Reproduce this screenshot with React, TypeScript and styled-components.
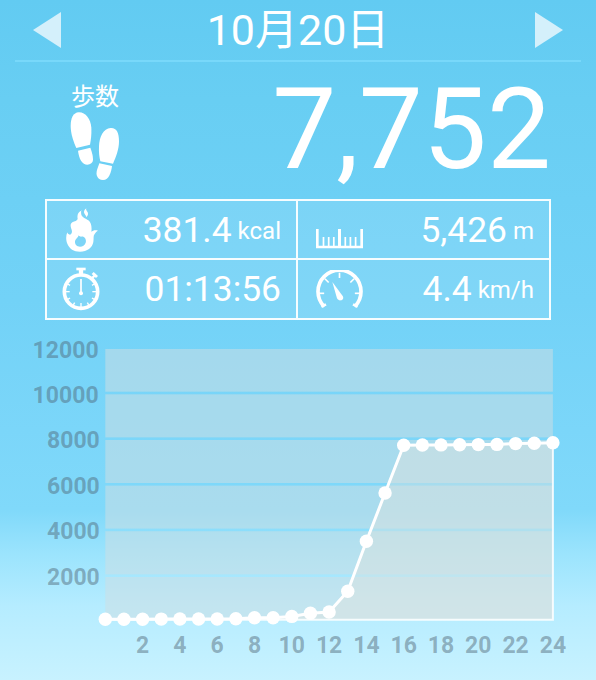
import React from "react";
import styled, { createGlobalStyle } from "styled-components";

const GlobalStyle = createGlobalStyle`
  * { box-sizing: border-box; }
  body { margin: 0; }
`;

const Screen = styled.main`
  width: 596px;
  height: 680px;
  overflow: hidden;
  display: flex;
  flex-direction: column;
  color: #fff;
  font-family: Roboto, "Noto Sans CJK JP", sans-serif;
  background: linear-gradient(
    #62cbf2 0, #68cef3 100px, #72d2f7 300px, #7bd6f9 430px,
    #80d9fa 510px, #9ce4fd 555px, #b5ecff 605px, #c8f2ff 680px
  );
`;

const DateBar = styled.header`
  height: 62px;
  margin: 0 15px;
  padding: 0 18px;
  display: flex;
  align-items: center;
  justify-content: space-between;
  border-bottom: 2px solid #78d8fa;
`;

const DateTitle = styled.h1`
  margin: 0;
  font-size: 43px;
  line-height: 60px;
  font-weight: 400;
  white-space: nowrap;
`;

const ArrowButton = styled.button`
  width: 28px;
  height: 36px;
  padding: 0;
  border: 0;
  background: none;
  color: #d4f0fb;
  svg { display: block; }
`;

const Summary = styled.section`
  height: 137px;
  padding: 0 45px 0 70px;
  display: flex;
  justify-content: space-between;
`;

const StepsLabel = styled.div`
  width: 50px;
  padding-top: 20px;
  display: flex;
  flex-direction: column;
  align-items: center;
  font-size: 24px;
  line-height: 30px;
  white-space: nowrap;
  svg { display: block; }
`;

const StepCount = styled.div`
  font-size: 114px;
  line-height: 135px;
`;

const Stats = styled.section`
  width: 506px;
  height: 121px;
  margin-left: 45px;
  display: grid;
  grid-template-columns: 249px 251px;
  grid-template-rows: 57px 58px;
  gap: 2px;
  border: 2px solid #f6fdff;
  background: linear-gradient(#f6fdff, #f6fdff) 249px 0 / 2px 100% no-repeat,
    linear-gradient(#f6fdff, #f6fdff) 0 57px / 100% 2px no-repeat,
    rgba(255, 255, 255, 0.1);
`;

const Stat = styled.div`
  padding: 0 15px;
  display: flex;
  align-items: center;
  justify-content: space-between;
`;

const IconSlot = styled.div<{ $width: number; $drop?: number }>`
  width: ${(p) => p.$width}px;
  height: 100%;
  padding-top: ${(p) => p.$drop ?? 0}px;
  display: flex;
  align-items: center;
  justify-content: center;
  svg { display: block; }
`;

const Reading = styled.div`
  display: flex;
  align-items: baseline;
  gap: 6px;
  font-size: 35.4px;
  line-height: 42px;
  white-space: nowrap;
`;

const Unit = styled.span`
  font-size: 24px;
  line-height: 30px;
  transform: translateY(-3px);
`;

const Chart = styled.svg`
  display: block;
  width: 596px;
  height: 360px;
  text {
    font: 700 23px Roboto, sans-serif;
    fill: rgba(76, 96, 111, 0.45);
  }
`;

const Arrow = ({ next = false }: { next?: boolean }) => (
  <svg width="28" height="36" viewBox="0 0 28 36" fill="currentColor">
    <path d={next ? "M0 0 28 18 0 36Z" : "M28 0 0 18 28 36Z"} />
  </svg>
);

const Footprints = () => (
  <svg width="50" height="69" viewBox="0 0 150 207" fill="#fff">
    <path d="M26 1C10 2 2 18 2 42c0 24 9 48 17 66l41-10c3-16 5-32 4-51C62 20 46 0 26 1Z" />
    <path d="M24 116 61 107c5 13 8 25 8 35 0 11-8 16-17 16-15 0-25-16-28-42Z" />
    <path d="M122 48c-22 1-34 27-35 55-1 18 1 33 4 45l38 7c9-20 18-43 18-67 0-26-7-41-25-40Z" />
    <path d="M88 154 126 162c-2 18-9 42-27 42-18-1-22-16-18-30Z" />
  </svg>
);

const Flame = () => (
  <svg width="32" height="44" viewBox="0 0 96 132" fill="#fff">
    <path
      fillRule="evenodd"
      d="M48 7C35 12 33 23 35 33 34 38 26 40 19 43 11 48 14 58 17 65c2 8 0 14-5 15-5 0-8-4-8-7C-1 84 0 98 4 107c6 15 19 24 38 24 22 0 37-12 40-29 2-10-1-19 4-24 3-5 6-8 10-10-8-3-15-1-20 3 2-13 0-27-9-34-8-6-18-8-21-17-1-5-1-9 0-13ZM38 82c4 6 8 3 14 4 7 3 9 12 7 18-3 8-9 12-17 12-9 0-15-6-15-14 0-9 9-12 11-20Z"
    />
    <path d="M61 1c-7 5-9 11-5 17 3 4 5 6 5 10 7-7 6-13 2-18-3-4-3-6-2-9Z" />
  </svg>
);

const Stopwatch = () => (
  <svg width="38" height="44" viewBox="0 0 114 132" fill="none" stroke="#fff">
    <circle cx="57" cy="74" r="50" strokeWidth="11" />
    <path d="M43 6H71" strokeWidth="8" />
    <path d="M57 6V22" strokeWidth="13" />
    <path d="m89 34 9-8" strokeWidth="7" />
    <path d="m92 18 13 12" strokeWidth="9" />
    <path d="M57 36V78" strokeWidth="5" />
    <circle cx="57" cy="79" r="6" fill="#fff" stroke="none" />
    {[60, 90, 120, 150, 180, 210, 240, 270, 300].map((angle) => (
      <path
        key={angle}
        d={angle % 90 === 0 ? "M57 28V40" : "M57 28V36"}
        strokeWidth="4"
        transform={`rotate(${angle} 57 74)`}
      />
    ))}
  </svg>
);

const Ruler = () => (
  <svg width="47" height="20" viewBox="0 0 47 20" fill="none" stroke="#fff">
    <path d="M1.3 0V18H45.7V0" strokeWidth="2.7" />
    <path d="M23.5 0V18" strokeWidth="3" />
    <path d="M7.5 8V18M12.7 8V18M17.8 8V18M29.3 8V18M34.4 8V18M39.6 8V18" strokeWidth="1.7" />
  </svg>
);

const Gauge = () => (
  <svg width="47" height="39" viewBox="0 0 141 117" fill="none" stroke="#fff">
    <path d="M24.5 110A64.5 64.5 0 1 1 116.5 110" strokeWidth="11" />
    <path d="m16 110 14-7M125 110l-14-7" strokeWidth="8" />
    {[-90, -45, 0, 45, 90].map((angle) => (
      <path key={angle} d="M70.5 8V24" strokeWidth="5" transform={`rotate(${angle} 70.5 70)`} />
    ))}
    <path d="M49 36 80 78c4 7 0 12-5 13-5 1-9-1-12-6Z" fill="#fff" stroke="none" />
  </svg>
);

const stats = [
  { icon: <Flame />, slot: 39, value: "381.4", unit: "kcal" },
  { icon: <Ruler />, slot: 53, drop: 19, value: "5,426", unit: "m" },
  { icon: <Stopwatch />, slot: 38, value: "01:13:56" },
  { icon: <Gauge />, slot: 53, value: "4.4", unit: "km/h" },
];

/* Chart geometry: hourly cumulative steps, as heights inside the 596x360 drawing. */
const LEFT = 105.3;
const HOUR = 18.65;
const BASE = 299.7;
const levels = [
  299.3, 299.2, 299.2, 299.1, 299, 299, 299, 298.8, 297.8, 297.7, 296.4, 293.3,
  292, 271.3, 221.3, 173, 125.3, 125, 124.9, 124.7, 124.6, 124.4, 123.6, 123.2, 122.7,
];
const points = levels.map((y, hour) => ({ x: LEFT + hour * HOUR, y }));
const line = points.map((p) => `${p.x},${p.y}`).join(" ");
const RIGHT = LEFT + 24 * HOUR;
const bands = [29, 74.3, 120, 165.6, 211.2, 257];
const yLabels = [12000, 10000, 8000, 6000, 4000, 2000];

const StepsChart = () => (
  <Chart viewBox="0 0 596 360">
    {bands.map((top, i) => {
      const bottom = i < 5 ? bands[i + 1] - 2.6 : BASE;
      return (
        <rect
          key={top}
          x={LEFT}
          y={top}
          width={RIGHT - LEFT}
          height={bottom - top}
          fill="rgba(208,222,227,.52)"
        />
      );
    })}
    <polygon points={`${LEFT},${BASE} ${line} ${RIGHT},${BASE}`} fill="rgba(227,227,220,.4)" />
    <path
      d={`M${LEFT} ${BASE}H${RIGHT}V${levels[24]}`}
      fill="none"
      stroke="#fff"
      strokeOpacity=".85"
      strokeWidth="2"
    />
    <polyline points={line} fill="none" stroke="#fff" strokeWidth="3" />
    {points.map((p) => (
      <circle key={p.x} cx={p.x} cy={p.y} r="6.7" fill="#fff" />
    ))}
    {yLabels.map((value, i) => (
      <text key={value} x={i < 2 ? 98.6 : 99.8} y={37.6 + i * 45.4} textAnchor="end">
        {value}
      </text>
    ))}
    {Array.from({ length: 12 }, (_, i) => (i + 1) * 2).map((hour) => (
      <text key={hour} x={LEFT + hour * HOUR} y="333" textAnchor="middle">
        {hour}
      </text>
    ))}
  </Chart>
);

export default function App() {
  return (
    <>
      <GlobalStyle />
      <Screen>
        <DateBar>
          <ArrowButton aria-label="前の日"><Arrow /></ArrowButton>
          <DateTitle>10月20日</DateTitle>
          <ArrowButton aria-label="次の日"><Arrow next /></ArrowButton>
        </DateBar>
        <Summary>
          <StepsLabel>
            歩数
            <Footprints />
          </StepsLabel>
          <StepCount>7,752</StepCount>
        </Summary>
        <Stats>
          {stats.map(({ icon, slot, drop, value, unit }) => (
            <Stat key={value}>
              <IconSlot $width={slot} $drop={drop}>{icon}</IconSlot>
              <Reading>
                {value}
                {unit && <Unit>{unit}</Unit>}
              </Reading>
            </Stat>
          ))}
        </Stats>
        <StepsChart />
      </Screen>
    </>
  );
}
